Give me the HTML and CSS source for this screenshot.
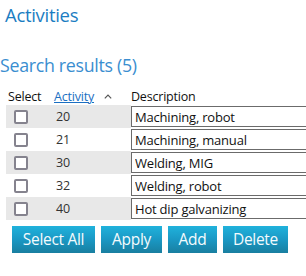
FILE: index.html
```html
<!DOCTYPE html>
<html>
<head>
<meta charset="utf-8">
<link rel="stylesheet" href="styles.css">
</head>
<body>
<h1 class="title">Activities</h1>
<h2 class="subtitle">Search results (5)</h2>
<table class="grid">
  <colgroup>
    <col class="c-select">
    <col class="c-activity">
    <col class="c-desc">
  </colgroup>
  <thead>
    <tr>
      <th class="col-select">Select</th>
      <th class="col-activity"><a href="#" class="sort-link">Activity</a><svg class="caret" width="8" height="5" viewBox="0 0 8 5"><path d="M0.8 4.3 L4 1.1 L7.2 4.3" fill="none" stroke="#555" stroke-width="1.2"/></svg></th>
      <th class="col-desc">Description</th>
    </tr>
  </thead>
  <tbody>
    <tr class="alt">
      <td class="col-select"><span class="check"></span></td>
      <td class="col-activity">20</td>
      <td class="col-desc"><input class="desc-input" type="text" value="Machining, robot"></td>
    </tr>
    <tr>
      <td class="col-select"><span class="check"></span></td>
      <td class="col-activity">21</td>
      <td class="col-desc"><input class="desc-input" type="text" value="Machining, manual"></td>
    </tr>
    <tr class="alt">
      <td class="col-select"><span class="check"></span></td>
      <td class="col-activity">30</td>
      <td class="col-desc"><input class="desc-input" type="text" value="Welding, MIG"></td>
    </tr>
    <tr>
      <td class="col-select"><span class="check"></span></td>
      <td class="col-activity">32</td>
      <td class="col-desc"><input class="desc-input" type="text" value="Welding, robot"></td>
    </tr>
    <tr class="alt">
      <td class="col-select"><span class="check"></span></td>
      <td class="col-activity">40</td>
      <td class="col-desc"><input class="desc-input" type="text" value="Hot dip galvanizing"></td>
    </tr>
  </tbody>
</table>
<div class="actions">
  <button class="btn btn-selectall">Select All</button>
  <button class="btn btn-apply">Apply</button>
  <button class="btn btn-add">Add</button>
  <button class="btn btn-delete">Delete</button>
</div>
</body>
</html>
```
FILE: styles.css
```css
html, body {
  margin: 0;
  padding: 0;
  background: #ffffff;
  overflow: hidden;
}
body {
  width: 306px;
  height: 276px;
  font-family: "Open Sans", "Noto Sans", sans-serif;
  color: #222;
}
.title {
  margin: 0;
  padding: 2px 0 0 5px;
  font-size: 18.5px;
  font-weight: normal;
  line-height: 25px;
  color: #1b7dc2;
  letter-spacing: -0.3px;
}
.subtitle {
  margin: 0;
  padding: 26px 0 0 0;
  font-size: 17.8px;
  font-weight: normal;
  line-height: 24px;
  color: #3a8ed0;
  letter-spacing: -0.3px;
}
.grid {
  margin: 12px 0 0 6px;
  border-collapse: collapse;
  table-layout: fixed;
  width: 300px;
  font-size: 12.5px;
  letter-spacing: -0.2px;
  white-space: nowrap;
}
.c-select { width: 38px; }
.c-activity { width: 87px; }
.c-desc { width: 175px; }
.grid th {
  font-weight: normal;
  text-align: left;
  height: 15px;
  padding: 0 0 1px 0;
  line-height: 15px;
  color: #111;
}
.grid th.col-select { padding-left: 2px; }
.grid th.col-activity { padding-left: 10px; }
.grid td {
  height: 23px;
  padding: 0;
}
.grid tr.alt td.col-select,
.grid tr.alt td.col-activity {
  background: #e8e8e8;
}
.grid td.col-select {
  padding-left: 8px;
}
.grid td.col-activity {
  padding-left: 12px;
  color: #333;
}
.sort-link {
  color: #1b6fc2;
  text-decoration: underline;
}
.caret {
  display: inline-block;
  margin-left: 10px;
  vertical-align: 2px;
}
.check {
  display: block;
  width: 10px;
  height: 10px;
  border: 2px solid #85838e;
  border-radius: 2px;
  background: #fff;
}
.desc-input {
  display: block;
  box-sizing: border-box;
  width: 175px;
  height: 21px;
  margin: 0;
  padding: 0 0 0 3px;
  border: 1px solid #6b6b6b;
  border-right: none;
  font-family: inherit;
  font-size: 13px;
  letter-spacing: -0.2px;
  color: #111;
  background: #fff;
  outline: none;
}
.actions {
  display: flex;
  gap: 6px;
  margin: 6px 0 0 12px;
}
.btn {
  height: 27px;
  padding: 0;
  border: none;
  border-radius: 0;
  background: linear-gradient(to bottom, #20b2dc 0%, #1a98c4 50%, #197fa0 100%);
  color: #f4fbfd;
  font-family: inherit;
  font-size: 15.5px;
  letter-spacing: -0.3px;
  line-height: 27px;
}
.btn-selectall { width: 83px; }
.btn-apply { width: 61px; }
.btn-add { width: 49px; }
.btn-delete { width: 65px; }
```
